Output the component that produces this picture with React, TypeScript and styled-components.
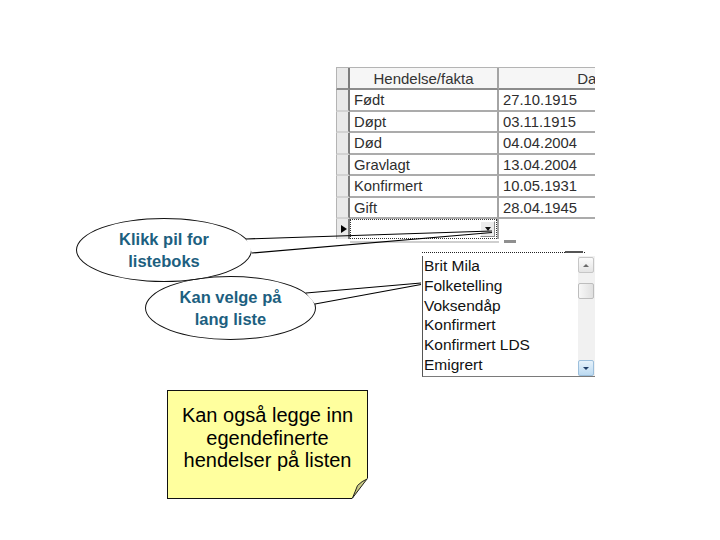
import React from "react";
import styled, { createGlobalStyle } from "styled-components";

const GlobalStyle = createGlobalStyle`
  html, body {
    margin: 0;
    padding: 0;
    background: #fff;
  }
  * {
    box-sizing: border-box;
  }
`;

const events = [
  { name: "Født", date: "27.10.1915", h: 22 },
  { name: "Døpt", date: "03.11.1915", h: 21 },
  { name: "Død", date: "04.04.2004", h: 22 },
  { name: "Gravlagt", date: "13.04.2004", h: 21 },
  { name: "Konfirmert", date: "10.05.1931", h: 22 },
  { name: "Gift", date: "28.04.1945", h: 21 },
];

const choices = [
  "Brit Mila",
  "Folketelling",
  "Voksendåp",
  "Konfirmert",
  "Konfirmert LDS",
  "Emigrert",
];

const App: React.FC = () => {
  return (
    <>
      <GlobalStyle />
      <StyledSlide>
        <StyledGrid>
          <StyledRow $h={22}>
            <StyledRowHead $header />
            <StyledHeadCell>Hendelse/fakta</StyledHeadCell>
            <StyledHeadCell>Dato</StyledHeadCell>
          </StyledRow>
          {events.map((e) => (
            <StyledRow key={e.name} $h={e.h}>
              <StyledRowHead />
              <StyledCell>{e.name}</StyledCell>
              <StyledCell>{e.date}</StyledCell>
            </StyledRow>
          ))}
          <StyledRow $h={20}>
            <StyledRowHead $current>
              <StyledPointer />
            </StyledRowHead>
            <StyledCell $plain>
              <StyledCombo>
                <StyledDropButton>
                  <StyledDownArrow />
                </StyledDropButton>
              </StyledCombo>
            </StyledCell>
            <StyledCell $plain />
          </StyledRow>
          <StyledGridFoot>
            <span />
            <StyledFootLine />
            <StyledFootGrip />
          </StyledGridFoot>
        </StyledGrid>

        <StyledList>
          <StyledListGrip />
          <StyledListBody>
            <StyledItems>
              {choices.map((c) => (
                <StyledItem key={c}>{c}</StyledItem>
              ))}
            </StyledItems>
            <StyledScrollbar>
              <StyledScrollButton>
                <StyledScrollGlyph $up />
              </StyledScrollButton>
              <StyledThumb />
              <StyledScrollButton $active>
                <StyledScrollGlyph />
              </StyledScrollButton>
            </StyledScrollbar>
          </StyledListBody>
        </StyledList>

        <StyledBubble $x={76} $y={218} $w={176} $h={64}>
          Klikk pil for
          <br />
          listeboks
        </StyledBubble>
        <StyledBubble $x={145} $y={276} $w={171} $h={64}>
          Kan velge på
          <br />
          lang liste
        </StyledBubble>

        <StyledPointers viewBox="0 0 720 540" width="720" height="540">
          <polygon points="246,239 320,236.6 320,247.4 252,253" fill="#fff" />
          <line x1="246" y1="239" x2="492" y2="231" stroke="#000" strokeWidth="1.2" />
          <line x1="252" y1="253" x2="492" y2="232.5" stroke="#000" strokeWidth="1.2" />
          <polygon points="306,293 421,283 315,304" fill="#fff" />
          <line x1="306" y1="293" x2="421" y2="283" stroke="#000" strokeWidth="1.2" />
          <line x1="315" y1="304" x2="421" y2="284.5" stroke="#000" strokeWidth="1.2" />
        </StyledPointers>

        <StyledNote>
          Kan også legge inn
          <br />
          egendefinerte
          <br />
          hendelser på listen
          <StyledFold viewBox="0 0 17 22" width="17" height="22">
            <polygon points="1,22 17,22 17,1" fill="#fff" />
            <path
              d="M1.5 21 L16 2 Q11 4 6.5 8.5 Q4 15 1.5 21 Z"
              fill="#cbcb84"
              stroke="#222"
              strokeWidth="1"
              strokeLinejoin="round"
            />
          </StyledFold>
        </StyledNote>
      </StyledSlide>
    </>
  );
};

export default App;

const StyledSlide = styled.div`
  position: relative;
  width: 720px;
  height: 540px;
  overflow: hidden;
  background: #fff;
  font-family: "Liberation Sans", Arial, sans-serif;
`;

/* ---------- data grid ---------- */

const StyledGrid = styled.div`
  position: absolute;
  left: 336px;
  top: 67px;
  width: 259px;
  overflow: hidden;
  border-top: 1px solid #b4b4b4;
`;

const StyledRow = styled.div<{ $h: number }>`
  display: grid;
  grid-template-columns: 14px 149px 190px;
  height: ${({ $h }) => $h}px;
`;

const StyledRowHead = styled.div<{ $header?: boolean; $current?: boolean }>`
  display: flex;
  align-items: center;
  padding-left: 4px;
  background: #e9e9e9;
  border-left: 1px solid #b4b4b4;
  border-right: 2px solid #7c7c7c;
  border-bottom: ${({ $header, $current }) =>
    $header ? "2px solid #8c8c8c" : $current ? "none" : "2px solid #d2d2d2"};
`;

const StyledPointer = styled.div`
  width: 0;
  height: 0;
  border-top: 4.5px solid transparent;
  border-bottom: 4.5px solid transparent;
  border-left: 6px solid #000;
`;

const StyledHeadCell = styled.div`
  display: flex;
  align-items: center;
  justify-content: center;
  background: #f6f6f6;
  border-right: 2px solid #a4a4a4;
  border-bottom: 2px solid #8c8c8c;
  font-size: 15px;
  color: #333;
  white-space: nowrap;
`;

const StyledCell = styled.div<{ $plain?: boolean }>`
  display: flex;
  align-items: center;
  padding: ${({ $plain }) => ($plain ? "0" : "0 0 0 4px")};
  background: #fff;
  border-right: 2px solid #a4a4a4;
  border-bottom: ${({ $plain }) => ($plain ? "none" : "2px solid #ababab")};
  font-size: 14.8px;
  color: #2e2e2e;
  white-space: nowrap;
`;

const StyledCombo = styled.div`
  display: flex;
  align-items: center;
  justify-content: flex-end;
  width: 100%;
  height: 100%;
  padding-right: 1px;
  border: 1px dotted #333;
`;

const StyledDropButton = styled.div`
  display: flex;
  align-items: center;
  justify-content: center;
  width: 15px;
  height: 16px;
  background: #ececec;
  border: 1px solid;
  border-color: #fff #8a8a8a #8a8a8a #fff;
`;

const StyledDownArrow = styled.div`
  width: 0;
  height: 0;
  border-left: 3.5px solid transparent;
  border-right: 3.5px solid transparent;
  border-top: 4px solid #111;
`;

const StyledGridFoot = styled.div`
  display: grid;
  grid-template-columns: 14px 149px 22px;
  height: 4px;
  align-items: end;
`;

const StyledFootLine = styled.div`
  height: 2px;
  background: #cfcfcf;
`;

const StyledFootGrip = styled.div`
  height: 3px;
  margin-left: 5px;
  width: 12px;
  background: #8f8f8f;
`;

/* ---------- drop-down list ---------- */

const StyledList = styled.div`
  position: absolute;
  left: 422px;
  top: 252px;
  width: 173px;
  height: 125px;
  display: flex;
  flex-direction: column;
`;

const StyledListGrip = styled.div`
  position: relative;
  height: 4px;
  margin-right: 10px;
  background: repeating-linear-gradient(90deg, #222 0 1px, transparent 1px 2px)
    top / 100% 1px no-repeat;

  &::after {
    content: "";
    position: absolute;
    right: 2px;
    top: -1px;
    width: 18px;
    height: 2px;
    background: #555;
  }
`;

const StyledListBody = styled.div`
  flex: 1;
  display: flex;
  border-left: 1px solid #555;
  border-bottom: 1px solid #7a7a7a;
`;

const StyledItems = styled.div`
  flex: 1;
`;

const StyledItem = styled.div`
  height: 19.8px;
  line-height: 19.8px;
  padding-left: 1px;
  font-size: 15.5px;
  color: #111;
  white-space: nowrap;
`;

const StyledScrollbar = styled.div`
  width: 17px;
  display: flex;
  flex-direction: column;
  padding: 1px 1px 0 0;
  background: #f1f1f1;
`;

const StyledScrollButton = styled.div<{ $active?: boolean }>`
  display: flex;
  align-items: center;
  justify-content: center;
  height: 16px;
  margin-top: ${({ $active }) => ($active ? "auto" : "0")};
  border: 1px solid ${({ $active }) => ($active ? "#9cbfdc" : "#c6c6c6")};
  border-radius: 2px;
  background: ${({ $active }) =>
    $active
      ? "linear-gradient(#e6f2fb, #bcdaf1)"
      : "linear-gradient(#fbfbfb, #e4e4e4)"};
`;

const StyledScrollGlyph = styled.div<{ $up?: boolean }>`
  width: 0;
  height: 0;
  border-left: 3px solid transparent;
  border-right: 3px solid transparent;
  ${({ $up }) =>
    $up ? "border-bottom: 3px solid #6a6a6a;" : "border-top: 3px solid #1f3d66;"}
`;

const StyledThumb = styled.div`
  height: 16px;
  margin-top: 10px;
  border: 1px solid #bdbdbd;
  border-radius: 2px;
  background: linear-gradient(90deg, #f7f7f7, #e0e0e0);
`;

/* ---------- callouts ---------- */

const StyledBubble = styled.div<{ $x: number; $y: number; $w: number; $h: number }>`
  position: absolute;
  left: ${({ $x }) => $x}px;
  top: ${({ $y }) => $y}px;
  width: ${({ $w }) => $w}px;
  height: ${({ $h }) => $h}px;
  display: flex;
  align-items: center;
  justify-content: center;
  border: 1px solid #111;
  border-radius: 50%;
  font-size: 16.5px;
  font-weight: bold;
  line-height: 22px;
  text-align: center;
  color: #1d5f80;
  z-index: 2;
`;

const StyledPointers = styled.svg`
  position: absolute;
  left: 0;
  top: 0;
  pointer-events: none;
  z-index: 3;
`;

const StyledNote = styled.div`
  position: absolute;
  left: 167px;
  top: 390px;
  width: 201px;
  height: 109px;
  padding-top: 13px;
  border: 1px solid #111;
  background: #ffff9e;
  font-size: 20px;
  line-height: 22.5px;
  text-align: center;
  color: #000;
`;

const StyledFold = styled.svg`
  position: absolute;
  right: -1px;
  bottom: -1px;
`;
